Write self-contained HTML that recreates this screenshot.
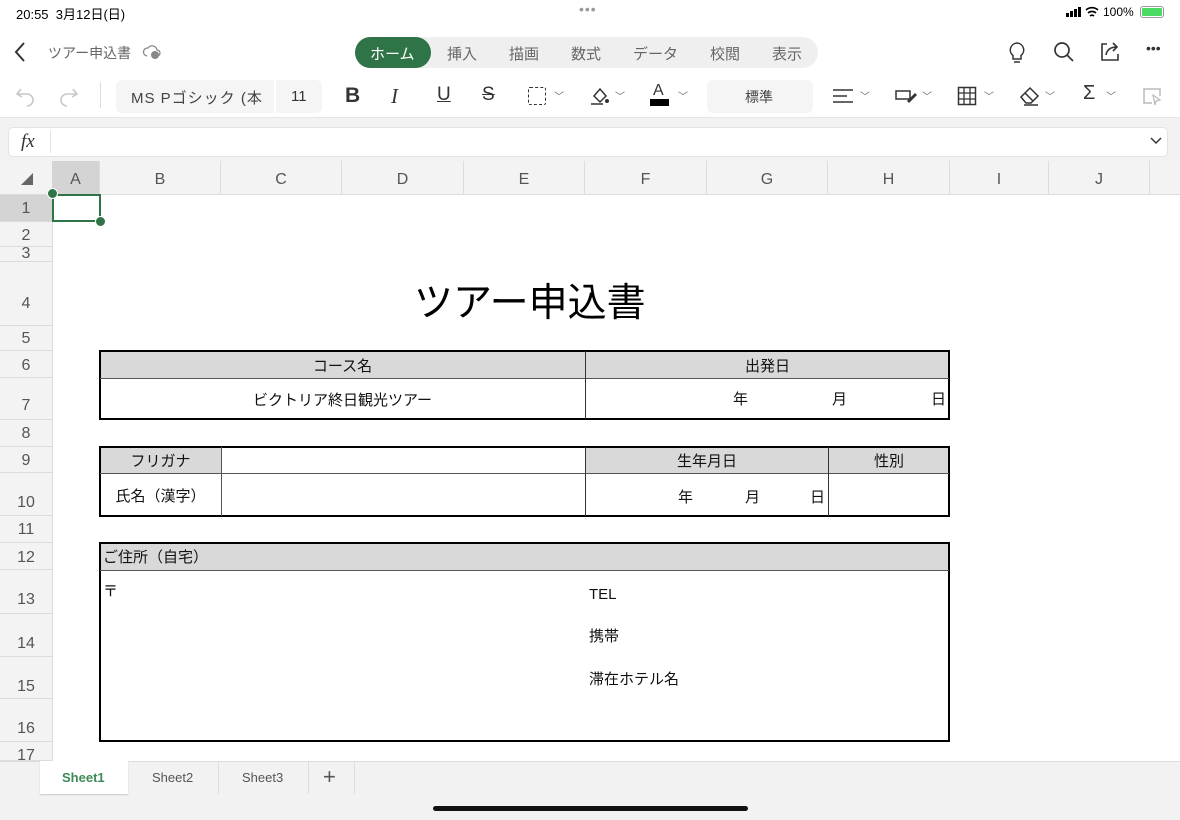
<!DOCTYPE html>
<html><head><meta charset="utf-8"><style>
*{margin:0;padding:0;box-sizing:border-box}
body{width:1180px;height:820px;position:relative;overflow:hidden;background:#fff;font-family:"Liberation Sans","Noto Sans CJK JP",sans-serif;color:#222}
.a{position:absolute}
.t{position:absolute;white-space:nowrap}
.gray{color:#666}
.rh{position:absolute;left:0;width:52px;text-align:center;font-size:16px;color:#555;background:#f3f3f3;border-bottom:1px solid #dcdcdc}
.ch{position:absolute;top:161px;height:34px;line-height:38px;text-align:center;font-size:16px;color:#555;border-right:1px solid #dcdcdc}
.cell{position:absolute;font-size:15px;color:#111;display:flex;align-items:center;justify-content:center}
.hd{background:#d9d9d9}
svg{position:absolute}
</style></head><body>
<!-- status bar -->
<div class="t" style="left:16px;top:4px;font-size:13px;color:#000">20:55&nbsp;&nbsp;3月12日(日)</div>
<div class="t" style="left:579px;top:1px;font-size:14px;color:#999;letter-spacing:1px">•••</div>
<div class="a" style="left:1066px;top:13px;width:3px;height:4px;background:#000"></div>
<div class="a" style="left:1070px;top:11px;width:3px;height:6px;background:#000"></div>
<div class="a" style="left:1074px;top:9px;width:3px;height:8px;background:#000"></div>
<div class="a" style="left:1078px;top:7px;width:3px;height:10px;background:#000"></div>
<svg style="left:1085px;top:6px" width="14" height="12"><path d="M1 4a9 9 0 0 1 12 0M3 7a6 6 0 0 1 8 0M5 10a3 3 0 0 1 4 0" stroke="#000" stroke-width="1.6" fill="none"/></svg>
<div class="t" style="left:1103px;top:5px;font-size:12px;color:#000">100%</div>
<div class="a" style="left:1140px;top:6px;width:24px;height:12px;border:1px solid #999;border-radius:3px;padding:1px"><div style="width:100%;height:100%;background:#4cd964;border-radius:1px"></div></div>
<!-- title row -->
<svg style="left:12px;top:40px" width="16" height="24"><path d="M12 3 L4 12 L12 21" stroke="#333" stroke-width="2" fill="none"/></svg>
<div class="t gray" style="left:48px;top:43px;font-size:14px">ツアー申込書</div>
<svg style="left:142px;top:42px" width="20" height="20"><path d="M5 14 a4 4 0 0 1 1-8 a5 5 0 0 1 9 2 a3 3 0 0 1 0 6" stroke="#888" stroke-width="1.3" fill="none"/><circle cx="13" cy="13" r="4" fill="#888"/></svg>
<div class="a" style="left:355px;top:37px;width:463px;height:31px;background:#efefef;border-radius:16px"></div>
<div class="a" style="left:355px;top:37px;width:76px;height:31px;background:#2f7446;border-radius:16px"></div>
<div class="t" style="left:370px;top:43px;font-size:15px;color:#fff">ホーム</div>
<div class="t gray" style="left:447px;top:43px;font-size:15px">挿入</div>
<div class="t gray" style="left:509px;top:43px;font-size:15px">描画</div>
<div class="t gray" style="left:571px;top:43px;font-size:15px">数式</div>
<div class="t gray" style="left:633px;top:43px;font-size:15px">データ</div>
<div class="t gray" style="left:710px;top:43px;font-size:15px">校閲</div>
<div class="t gray" style="left:772px;top:43px;font-size:15px">表示</div>
<svg style="left:1005px;top:40px" width="24" height="26"><path d="M12 3a7 7 0 0 0-4 12.5V19h8v-3.5A7 7 0 0 0 12 3zM9 22h6" stroke="#333" stroke-width="1.5" fill="none"/></svg>
<svg style="left:1052px;top:40px" width="24" height="24"><circle cx="10" cy="10" r="7" stroke="#333" stroke-width="1.7" fill="none"/><path d="M15 15l6 6" stroke="#333" stroke-width="1.7"/></svg>
<svg style="left:1098px;top:40px" width="24" height="24"><path d="M9 4H4v16h16v-6" stroke="#333" stroke-width="1.6" fill="none"/><path d="M8 15c1-6 5-8 11-8M15 3l4 4-4 4" stroke="#333" stroke-width="1.6" fill="none"/></svg>
<div class="t" style="left:1146px;top:40px;font-size:14px;color:#333">•••</div>
<!-- toolbar -->
<svg style="left:14px;top:85px" width="22" height="22"><path d="M7 4L3 9l5 3M3 9h10a6 6 0 0 1 0 12" stroke="#c8c8c8" stroke-width="1.6" fill="none"/></svg>
<svg style="left:58px;top:85px" width="22" height="22"><path d="M15 4l4 5-5 3M19 9H9a6 6 0 0 0 0 12" stroke="#c8c8c8" stroke-width="1.6" fill="none"/></svg>
<div class="a" style="left:100px;top:82px;width:1px;height:26px;background:#ddd"></div>
<div class="a" style="left:116px;top:80px;width:158px;height:33px;background:#f5f5f5;border-radius:6px 0 0 6px"></div>
<div class="t" style="left:131px;top:87px;font-size:15px;color:#444;letter-spacing:1px">MS Pゴシック (本</div>
<div class="a" style="left:276px;top:80px;width:46px;height:33px;background:#f5f5f5;border-radius:0 6px 6px 0"></div>
<div class="t" style="left:291px;top:88px;font-size:15px;color:#333">11</div>
<div class="t" style="left:345px;top:84px;font-size:21px;font-weight:bold;color:#333">B</div>
<div class="t" style="left:391px;top:84px;font-size:21px;font-style:italic;font-family:'Liberation Serif',serif;color:#333">I</div>
<div class="t" style="left:437px;top:84px;font-size:19px;text-decoration:underline;color:#333">U</div>
<div class="t" style="left:482px;top:84px;font-size:19px;text-decoration:line-through;color:#333">S</div>
<div class="a" style="left:528px;top:87px;width:18px;height:18px;border:1.6px dashed #333;border-radius:2px"></div>
<div class="t" style="left:554px;top:88px;font-size:10px;color:#666">﹀</div>
<svg style="left:588px;top:84px" width="24" height="24"><path d="M6 12l6-7 6 7-6 6z M3 20h12" stroke="#333" stroke-width="1.5" fill="none"/><circle cx="19" cy="17" r="2" fill="#333"/></svg>
<div class="t" style="left:615px;top:88px;font-size:10px;color:#666">﹀</div>
<div class="t" style="left:653px;top:82px;font-size:16px;color:#333">A</div>
<div class="a" style="left:650px;top:99px;width:19px;height:7px;background:#000"></div>
<div class="t" style="left:678px;top:88px;font-size:10px;color:#666">﹀</div>
<div class="a" style="left:707px;top:80px;width:106px;height:33px;background:#f5f5f5;border-radius:6px"></div>
<div class="t" style="left:745px;top:87px;font-size:14px;color:#444">標準</div>
<svg style="left:832px;top:86px" width="24" height="20"><path d="M1 4h20M1 10h14M1 16h20" stroke="#333" stroke-width="1.5"/></svg>
<div class="t" style="left:860px;top:88px;font-size:10px;color:#666">﹀</div>
<svg style="left:895px;top:86px" width="24" height="20"><rect x="1" y="5" width="14" height="8" stroke="#333" stroke-width="1.5" fill="none"/><path d="M12 15l8-8 2 2-8 8z" fill="#333"/></svg>
<div class="t" style="left:922px;top:88px;font-size:10px;color:#666">﹀</div>
<svg style="left:957px;top:86px" width="22" height="22"><rect x="1.5" y="1.5" width="17" height="17" stroke="#333" stroke-width="1.5" fill="none"/><path d="M7 1.5v17M13 1.5v17M1.5 7h17M1.5 13h17" stroke="#333" stroke-width="1.3"/></svg>
<div class="t" style="left:984px;top:88px;font-size:10px;color:#666">﹀</div>
<svg style="left:1018px;top:84px" width="24" height="24"><path d="M3 13l9-9 8 8-7 7H8zM7 9l8 8M6 21h14" stroke="#333" stroke-width="1.5" fill="none"/></svg>
<div class="t" style="left:1045px;top:88px;font-size:10px;color:#666">﹀</div>
<div class="t" style="left:1083px;top:82px;font-size:20px;color:#333">Σ</div>
<div class="t" style="left:1106px;top:88px;font-size:10px;color:#666">﹀</div>
<svg style="left:1142px;top:86px" width="22" height="22"><path d="M10 17H2V3h16v7" stroke="#bbb" stroke-width="1.5" fill="none"/><path d="M11 9l7 5-4 1-1 4z" stroke="#bbb" stroke-width="1.2" fill="none"/></svg>
<!-- formula band -->
<div class="a" style="left:0;top:117px;width:1180px;height:44px;background:#f2f2f2;border-top:1px solid #e6e6e6"></div>
<div class="a" style="left:8px;top:127px;width:1160px;height:30px;background:#fff;border:1px solid #e2e2e2;border-radius:5px"></div>
<div class="t" style="left:21px;top:131px;font-size:19px;font-style:italic;font-family:'Liberation Serif',serif;color:#333">fx</div>
<div class="a" style="left:50px;top:131px;width:1px;height:22px;background:#e2e2e2"></div>
<svg style="left:1149px;top:136px" width="14" height="10"><path d="M2 2l5 5 5-5" stroke="#333" stroke-width="1.5" fill="none"/></svg>
<!-- column header -->
<div class="a" style="left:0;top:161px;width:1180px;height:34px;background:#f3f3f3;border-bottom:1px solid #dcdcdc"></div>
<svg style="left:20px;top:172px" width="14" height="14"><path d="M13 1V13H1z" fill="#666"/></svg>
<div class="ch" style="left:52px;width:48px;background:#d4d4d4">A</div>
<div class="ch" style="left:100px;width:121px">B</div>
<div class="ch" style="left:221px;width:121px">C</div>
<div class="ch" style="left:342px;width:122px">D</div>
<div class="ch" style="left:464px;width:121px">E</div>
<div class="ch" style="left:585px;width:122px">F</div>
<div class="ch" style="left:707px;width:121px">G</div>
<div class="ch" style="left:828px;width:122px">H</div>
<div class="ch" style="left:950px;width:99px">I</div>
<div class="ch" style="left:1049px;width:101px">J</div>
<!-- row headers -->
<div class="a" style="left:0;top:195px;width:53px;height:566px;background:#f3f3f3;border-right:1px solid #dcdcdc"></div>
<div class="rh" style="top:195px;height:27px;line-height:28px;background:#d4d4d4">1</div>
<div class="rh" style="top:222px;height:25px;line-height:28px">2</div>
<div class="rh" style="top:247px;height:15px;line-height:14px">3</div>
<div class="rh" style="top:262px;height:64px;line-height:84px">4</div>
<div class="rh" style="top:326px;height:25px;line-height:26px">5</div>
<div class="rh" style="top:351px;height:27px;line-height:29px">6</div>
<div class="rh" style="top:378px;height:42px;line-height:56px">7</div>
<div class="rh" style="top:420px;height:27px;line-height:28px">8</div>
<div class="rh" style="top:447px;height:26px;line-height:28px">9</div>
<div class="rh" style="top:473px;height:43px;line-height:60px">10</div>
<div class="rh" style="top:516px;height:27px;line-height:28px">11</div>
<div class="rh" style="top:543px;height:27px;line-height:29px">12</div>
<div class="rh" style="top:570px;height:44px;line-height:60px">13</div>
<div class="rh" style="top:614px;height:43px;line-height:60px">14</div>
<div class="rh" style="top:657px;height:42px;line-height:60px">15</div>
<div class="rh" style="top:699px;height:43px;line-height:60px">16</div>
<div class="rh" style="top:742px;height:19px;line-height:28px">17</div>
<!-- selection -->
<div class="a" style="left:52px;top:194px;width:49px;height:28px;border:2px solid #2f7446"></div>
<div class="a" style="left:47px;top:188px;width:11px;height:11px;border-radius:50%;background:#2f7446;border:1.5px solid #fff"></div>
<div class="a" style="left:95px;top:216px;width:11px;height:11px;border-radius:50%;background:#2f7446;border:1.5px solid #fff"></div>
<!-- title -->
<div class="t" style="left:414px;top:272px;font-size:39px;color:#000">ツアー申込書</div>
<!-- table 1 -->
<div class="cell hd" style="left:99px;top:351px;width:851px;height:27px"></div>
<div class="a" style="left:99px;top:350px;width:851px;height:70px;border:2px solid #000"></div>
<div class="a" style="left:100px;top:378px;width:849px;height:1px;background:#555"></div>
<div class="a" style="left:585px;top:351px;width:1px;height:68px;background:#333"></div>
<div class="cell" style="left:100px;top:352px;width:485px;height:26px">コース名</div>
<div class="cell" style="left:586px;top:352px;width:363px;height:26px">出発日</div>
<div class="cell" style="left:100px;top:379px;width:485px;height:40px">ビクトリア終日観光ツアー</div>
<div class="t" style="left:733px;top:388px;font-size:15px;color:#111">年</div>
<div class="t" style="left:832px;top:388px;font-size:15px;color:#111">月</div>
<div class="t" style="left:931px;top:388px;font-size:15px;color:#111">日</div>
<!-- table 2 -->
<div class="cell hd" style="left:99px;top:447px;width:122px;height:26px"></div>
<div class="cell hd" style="left:585px;top:447px;width:365px;height:26px"></div>
<div class="a" style="left:99px;top:446px;width:851px;height:71px;border:2px solid #000"></div>
<div class="a" style="left:100px;top:473px;width:849px;height:1px;background:#555"></div>
<div class="a" style="left:221px;top:447px;width:1px;height:69px;background:#555"></div>
<div class="a" style="left:585px;top:447px;width:1px;height:69px;background:#333"></div>
<div class="a" style="left:828px;top:447px;width:1px;height:69px;background:#333"></div>
<div class="cell" style="left:100px;top:448px;width:121px;height:25px">フリガナ</div>
<div class="cell" style="left:100px;top:474px;width:121px;height:42px">氏名（漢字）</div>
<div class="cell" style="left:586px;top:448px;width:242px;height:25px">生年月日</div>
<div class="cell" style="left:829px;top:448px;width:120px;height:25px">性別</div>
<div class="t" style="left:678px;top:486px;font-size:15px;color:#111">年</div>
<div class="t" style="left:745px;top:486px;font-size:15px;color:#111">月</div>
<div class="t" style="left:810px;top:486px;font-size:15px;color:#111">日</div>
<!-- table 3 -->
<div class="cell hd" style="left:99px;top:543px;width:851px;height:27px"></div>
<div class="a" style="left:99px;top:542px;width:851px;height:200px;border:2px solid #000"></div>
<div class="a" style="left:100px;top:570px;width:849px;height:1px;background:#555"></div>
<div class="t" style="left:103px;top:546px;font-size:15px;color:#111">ご住所（自宅）</div>
<div class="t" style="left:103px;top:580px;font-size:15px;color:#111">〒</div>
<div class="t" style="left:589px;top:586px;font-size:15px;color:#111">TEL</div>
<div class="t" style="left:589px;top:625px;font-size:15px;color:#111">携帯</div>
<div class="t" style="left:589px;top:668px;font-size:15px;color:#111">滞在ホテル名</div>
<!-- sheet tabs -->
<div class="a" style="left:0;top:761px;width:1180px;height:59px;background:#f2f2f2;border-top:1px solid #ddd"></div>
<div class="a" style="left:40px;top:761px;width:88px;height:33px;background:#fff;box-shadow:0 1px 1px #ccc"></div>
<div class="t" style="left:62px;top:770px;font-size:13px;font-weight:bold;color:#3f8a57">Sheet1</div>
<div class="t" style="left:152px;top:770px;font-size:13px;color:#555">Sheet2</div>
<div class="a" style="left:218px;top:762px;width:1px;height:32px;background:#ddd"></div>
<div class="t" style="left:242px;top:770px;font-size:13px;color:#555">Sheet3</div>
<div class="a" style="left:308px;top:762px;width:1px;height:32px;background:#ddd"></div>
<div class="t" style="left:323px;top:764px;font-size:22px;color:#555">+</div>
<div class="a" style="left:354px;top:762px;width:1px;height:32px;background:#ddd"></div>
<div class="a" style="left:433px;top:806px;width:315px;height:5px;background:#111;border-radius:3px"></div>
</body></html>
